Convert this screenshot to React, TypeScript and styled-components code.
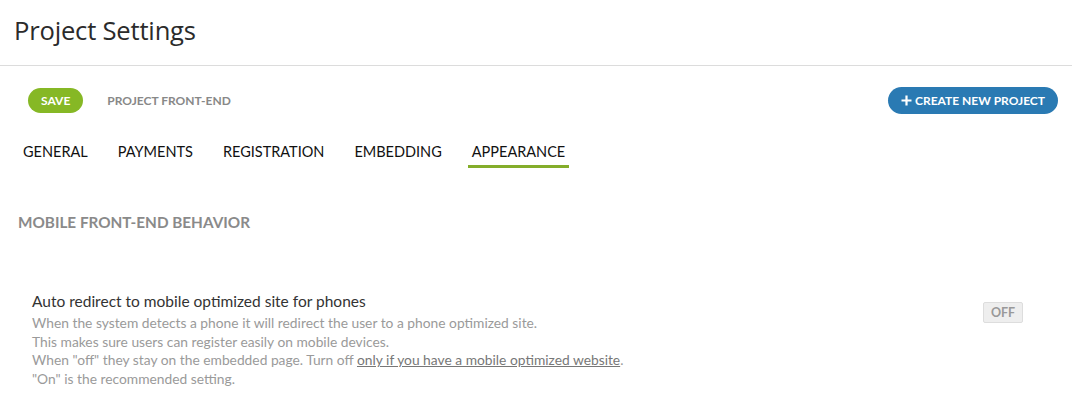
import React from 'react';
import styled, { createGlobalStyle } from 'styled-components';

const Global = createGlobalStyle`
  html, body {
    margin: 0;
    padding: 0;
    background: #fff;
    font-family: Lato, "Liberation Sans", sans-serif;
  }
`;

const Page = styled.div`
  width: 1072px;
`;

const Header = styled.div`
  height: 66px;
  border-bottom: 1px solid #dcdcdc;
  padding: 14px 0 0 14px;
  box-sizing: border-box;
`;

const Title = styled.h1`
  margin: 0;
  font-family: "Open Sans", Lato, sans-serif;
  font-weight: 400;
  font-size: 25.6px;
  line-height: 34px;
  color: #2b2b2b;
  letter-spacing: -0.2px;
`;

const Toolbar = styled.div`
  display: flex;
  align-items: center;
  padding: 20px 14px 0 28px;
  height: 48px;
  box-sizing: border-box;
`;

const Pill = styled.button<{ $color: string; $tall?: boolean }>`
  border: none;
  background: ${(p) => p.$color};
  color: #fff;
  font-family: Lato, sans-serif;
  font-weight: 700;
  font-size: 12px;
  height: ${(p) => (p.$tall ? 27 : 25)}px;
  border-radius: 14px;
  padding: 0 13px;
  display: flex;
  align-items: center;
  gap: 3px;
  cursor: pointer;
`;

const Crumb = styled.span`
  margin-left: 24px;
  font-size: 12px;
  font-weight: 700;
  color: #888;
`;

const Spacer = styled.div`
  flex: 1;
`;

const Tabs = styled.div`
  display: flex;
  padding: 0 0 0 19px;
  margin-top: 29px;
`;

const Tab = styled.div<{ $active?: boolean }>`
  font-size: 14.5px;
  color: #111;
  padding: 0 4px 4px;
  margin-right: 22px;
  line-height: 18px;
  border-bottom: 3px solid ${(p) => (p.$active ? '#84ad2a' : 'transparent')};
`;

const Section = styled.h2`
  margin: 44px 0 0 18px;
  font-size: 15.3px;
  font-weight: 700;
  color: #8a8a8a;
  line-height: 20px;
`;

const Row = styled.div`
  display: flex;
  align-items: flex-start;
  margin-top: 59px;
  padding: 0 49px 0 32px;
`;

const RowText = styled.div`
  flex: 1;
`;

const RowTitle = styled.div`
  font-size: 15.5px;
  color: #333;
  line-height: 20px;
`;

const Desc = styled.div`
  font-size: 13.8px;
  color: #9a9a9a;
  line-height: 18.7px;
  margin-top: 3px;
  a {
    color: #777;
    text-decoration: underline;
  }
`;

const Toggle = styled.div`
  margin-top: 11px;
  width: 38px;
  height: 19px;
  border: 1px solid #ddd;
  border-radius: 2px;
  background: #eee;
  color: #999;
  font-size: 12.5px;
  font-weight: 700;
  display: flex;
  align-items: center;
  justify-content: center;
`;

export default function App() {
  return (
    <Page>
      <Global />
      <Header>
        <Title>Project Settings</Title>
      </Header>
      <Toolbar>
        <Pill $color="#86b825">SAVE</Pill>
        <Crumb>PROJECT FRONT-END</Crumb>
        <Spacer />
        <Pill $color="#2a7ab3" $tall>
          <svg width="11" height="11" viewBox="0 0 11 11">
            <path d="M5.5 0.5v10M0.5 5.5h10" stroke="#fff" strokeWidth="2.2" />
          </svg>
          CREATE NEW PROJECT
        </Pill>
      </Toolbar>
      <Tabs>
        <Tab>GENERAL</Tab>
        <Tab>PAYMENTS</Tab>
        <Tab>REGISTRATION</Tab>
        <Tab>EMBEDDING</Tab>
        <Tab $active>APPEARANCE</Tab>
      </Tabs>
      <Section>MOBILE FRONT-END BEHAVIOR</Section>
      <Row>
        <RowText>
          <RowTitle>Auto redirect to mobile optimized site for phones</RowTitle>
          <Desc>
            When the system detects a phone it will redirect the user to a phone optimized site.
            <br />
            This makes sure users can register easily on mobile devices.
            <br />
            When "off" they stay on the embedded page. Turn off <a>only if you have a mobile optimized website</a>.
            <br />
            "On" is the recommended setting.
          </Desc>
        </RowText>
        <Toggle>OFF</Toggle>
      </Row>
    </Page>
  );
}
